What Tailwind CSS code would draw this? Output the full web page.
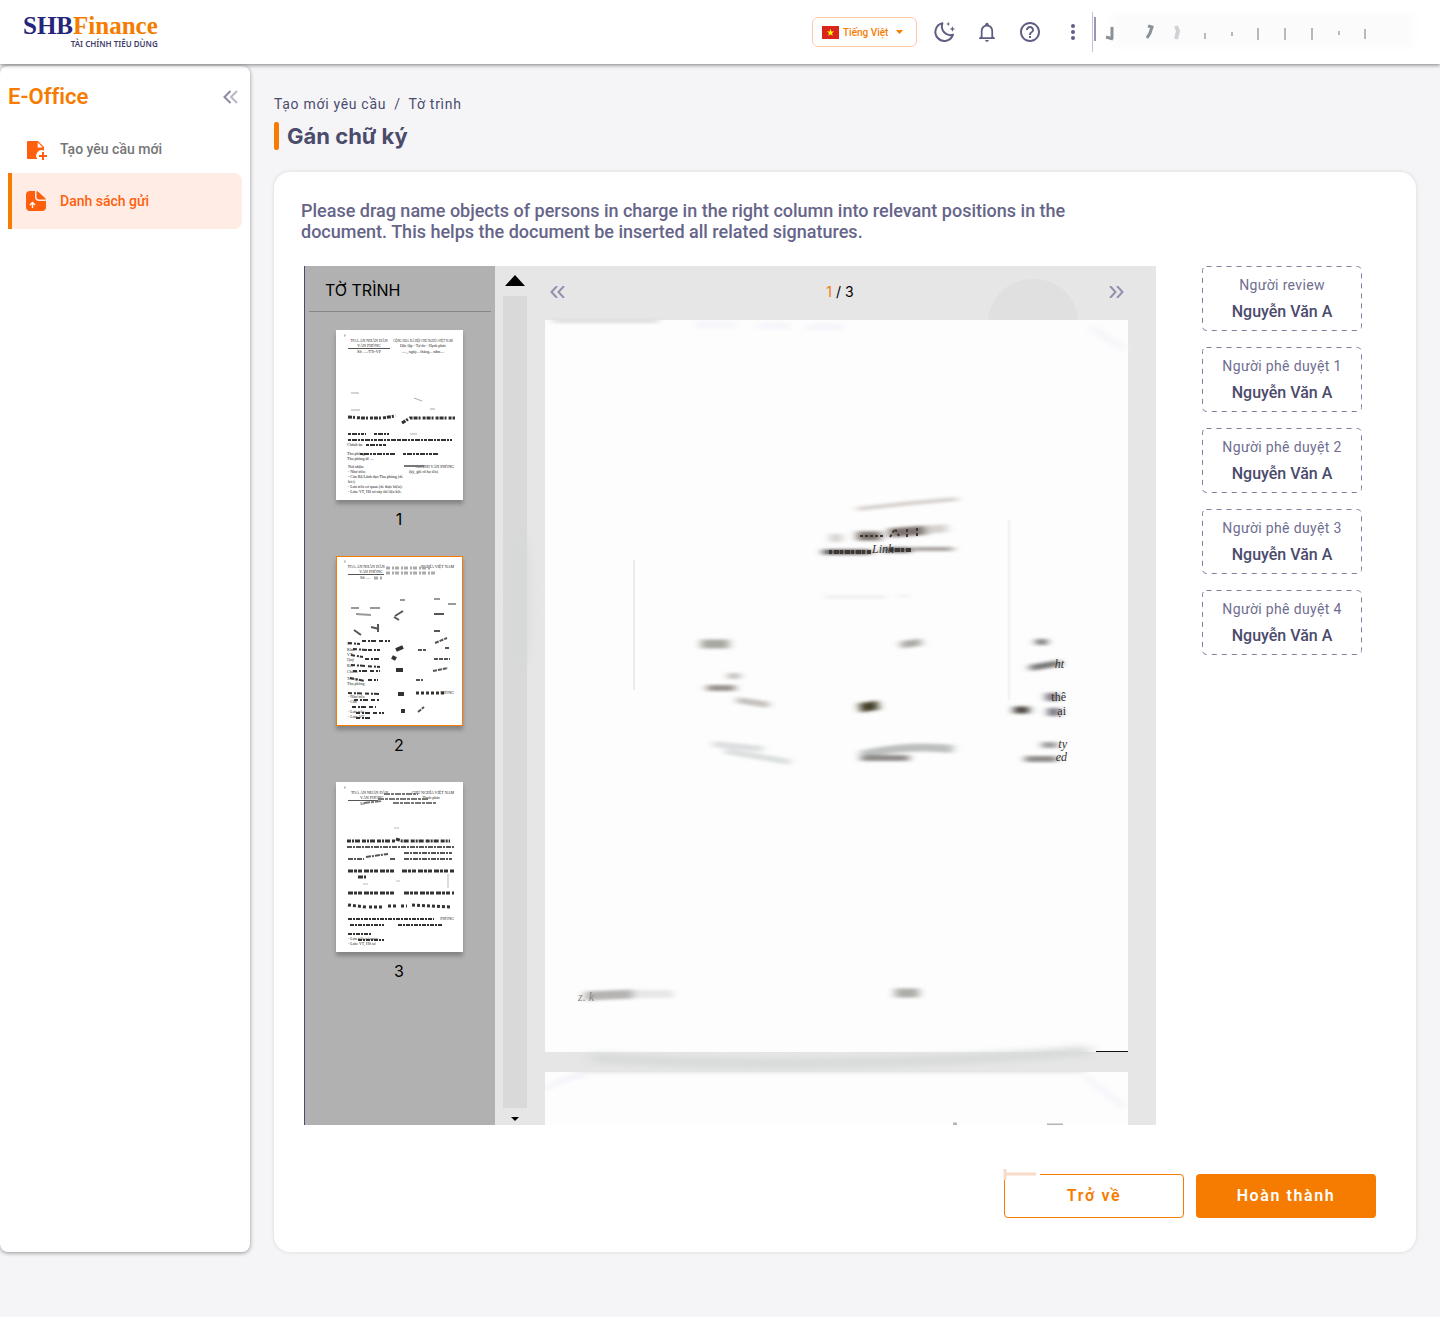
<!DOCTYPE html>
<html lang="vi">
<head>
<meta charset="utf-8">
<meta name="viewport" content="width=device-width, initial-scale=1">
<title>SHBFinance - Gán chữ ký</title>
<script src="https://cdn.jsdelivr.net/npm/@tailwindcss/browser@4"></script>
</head>
<body class="min-h-screen bg-[#f5f5f8] font-['Roboto',sans-serif] text-[#4b4b6c]">

<!-- Shared blur filters for scanned-document marks -->
<svg class="absolute size-0" aria-hidden="true">
  <defs>
    <filter id="b1" filterUnits="userSpaceOnUse" x="-100" y="-100" width="900" height="1000"><feGaussianBlur stdDeviation="0.7"/></filter>
    <filter id="b2" filterUnits="userSpaceOnUse" x="-100" y="-100" width="900" height="1000"><feGaussianBlur stdDeviation="4 1.500"/></filter>
    <filter id="b5" filterUnits="userSpaceOnUse" x="-100" y="-100" width="900" height="1000"><feGaussianBlur stdDeviation="7 3"/></filter>
  </defs>
</svg>

<header class="relative z-10 flex h-16 items-center justify-between bg-white pl-[23px] shadow-[0_1px_4px_rgba(0,0,0,0.5)]">
  <a href="#" class="flex flex-col items-end">
    <span class="font-['Liberation_Serif',serif] text-[25px] leading-6 font-bold text-[#25257c]">SHB<span class="text-[#f57c00]">Finance</span></span>
    <span class="font-['Noto_Sans',sans-serif] text-[8px] leading-3 font-semibold text-[#3f3d6b]">TÀI CHÍNH TIÊU DÙNG</span>
  </a>
  <div class="flex items-center">
    <button type="button" class="mr-[15px] flex h-[30px] w-[105px] items-center rounded-md border border-[#ffc9a8] pl-[9px] text-[10px] font-medium text-[#f57c00]">
      <svg class="mr-1 h-[13px] w-[17px]" viewBox="0 0 17 13" aria-hidden="true"><rect width="17" height="13" fill="#da251d"/><path d="M8.500 2.800l.9 2.600h2.800l-2.200 1.700.8 2.700-2.300-1.600-2.300 1.600.8-2.700-2.200-1.700h2.800z" fill="#ff0"/></svg>
      Tiếng Việt
      <svg class="ml-2 h-1 w-[7px]" viewBox="0 0 7 4" aria-hidden="true"><path d="M0 0h7L3.500 4z" fill="#f57c00"/></svg>
    </button>
    <div class="flex gap-[19px] text-[#5f5e83]">
      <button type="button" aria-label="Giao diện tối" class="size-6">
        <svg viewBox="0 0 24 24" fill="none" aria-hidden="true"><path d="M10.400 3.100A9 9 0 1 0 21 14.600C14.500 16.900 8 10.700 10.400 3.100z" stroke="currentColor" stroke-width="2" stroke-linejoin="round"/><path d="M16.200 1.800l.6 1.600 1.600.6-1.600.6-.6 1.600-.6-1.600-1.600-.6 1.600-.6zM20.400 6.200l.8 2 2 .8-2 .8-.8 2-.8-2-2-.8 2-.8z" fill="currentColor"/></svg>
      </button>
      <button type="button" aria-label="Thông báo" class="size-6">
        <svg viewBox="0 0 24 24" fill="currentColor" aria-hidden="true"><path d="M10 21h4c0 1.100-.9 2-2 2s-2-.9-2-2M21 19v1H3v-1l2-2v-6c0-3.100 2.030-5.830 5-6.710V4a2 2 0 1 1 4 0v.29c2.970.88 5 3.610 5 6.710v6l2 2m-4-8a5 5 0 1 0-10 0v7h10z" transform="translate(1.400 1) scale(.88 .9)"/></svg>
      </button>
      <button type="button" aria-label="Trợ giúp" class="size-6">
        <svg viewBox="0 0 24 24" fill="currentColor" aria-hidden="true"><path d="M11 18h2v-2h-2v2zm1-16C6.480 2 2 6.480 2 12s4.480 10 10 10 10-4.480 10-10S17.520 2 12 2zm0 18c-4.410 0-8-3.590-8-8s3.590-8 8-8 8 3.590 8 8-3.590 8-8 8zm0-14c-2.210 0-4 1.790-4 4h2c0-1.100.9-2 2-2s2 .9 2 2c0 2-3 1.750-3 5h2c0-2.250 3-2.500 3-5 0-2.210-1.790-4-4-4z"/></svg>
      </button>
      <button type="button" aria-label="Thêm" class="size-6">
        <svg viewBox="0 0 24 24" fill="currentColor" aria-hidden="true"><circle cx="12" cy="6" r="2"/><circle cx="12" cy="12" r="2"/><circle cx="12" cy="18" r="2"/></svg>
      </button>
    </div>
    <div class="ml-[7px] h-10 border-l border-[#c3c2d6]">
      <svg class="h-10 w-[347px]" viewBox="0 0 347 40" aria-hidden="true">
        <rect x="20" y="0" width="300" height="36" fill="#fbfbfc" filter="url(#b5)"/>
        <path d="M2 5v24" stroke="#9a95b0" stroke-width="2" filter="url(#b1)"/>
        <g fill="none" stroke="#8a9197" filter="url(#b1)">
          <path d="M19 15v12M13 25l7 2" stroke-width="3"/>
          <path d="M55 14l4 1-2 6-3 5" stroke-width="3"/>
          <path d="M83 14l2 5-2 8" stroke="#cfd1d5" stroke-width="4"/>
          <path d="M112 21v6M139 20v4M165 16v12M192 16v12M219 16v12M246 19v4M272 17v10" stroke="#b5babc" stroke-width="2"/>
        </g>
      </svg>
    </div>
  </div>
</header>

<div class="flex pb-[65px]">
  <aside class="mt-0.5 w-[250px] shrink-0 rounded-lg bg-white px-2 shadow-[0_1px_4px_rgba(0,0,0,0.4)]">
    <div class="flex h-[59px] items-center justify-between pt-0.5 pr-1">
      <h2 class="text-[22px] leading-7 font-semibold text-[#f57c00] [font-variant-ligatures:none]">E-Office</h2>
      <button type="button" aria-label="Thu gọn menu">
        <svg class="h-[14px] w-[15px]" viewBox="0 0 15 14" fill="none" stroke-width="2" aria-hidden="true"><path d="M7.500 1L1.500 7l6 6" stroke="#8b8aa3"/><path d="M14 1L8 7l6 6" stroke="#b9b8c8"/></svg>
      </button>
    </div>
    <nav class="text-sm font-medium">
      <a href="#" class="flex h-12 items-center gap-3 pl-4 text-[#757575]">
        <svg class="size-6" viewBox="0 0 24 24" aria-hidden="true"><path d="M4 4h10l6 6v3.500a5.500 5.500 0 0 0-6.500 8.500H4a1 1 0 0 1-1-1V5a1 1 0 0 1 1-1z" fill="#ff600f"/><path d="M13.700 5.500v5h5z" fill="#fff"/><path d="M19 15v8M15 19h8" stroke="#ff600f" stroke-width="2"/></svg>
        Tạo yêu cầu mới
      </a>
      <a href="#" aria-current="page" class="flex h-14 items-center gap-3 rounded-r-lg border-l-4 border-[#f57c00] bg-[#ffede5] pl-3 text-[#ff5f0d]">
        <svg class="size-6" viewBox="0 0 24 24" aria-hidden="true"><path d="M6 2h5v6a4 4 0 0 0 4 4h7v6a4 4 0 0 1-4 4H6a4 4 0 0 1-4-4V6a4 4 0 0 1 4-4z" fill="#ff5f0d"/><path d="M12.500 2.200c1 0 1.500.3 2 .8l6.500 6c.6.500.8 1 .8 1.600h-6.300a3 3 0 0 1-3-3z" fill="#ff5f0d"/><path d="M8.500 19v-5M6 16l2.500-2.500L11 16" fill="none" stroke="#fff" stroke-width="1.400"/></svg>
        Danh sách gửi
      </a>
    </nav>
  </aside>

  <main class="min-w-0 flex-1 px-6 pt-[30px]">
    <nav aria-label="Breadcrumb" class="flex gap-2 text-sm leading-5 tracking-wider">
      <a href="#">Tạo mới yêu cầu</a><span>/</span><a href="#">Tờ trình</a>
    </nav>
    <div class="mt-2 flex h-7 items-center gap-2">
      <span class="h-7 w-[5px] rounded-xs bg-[#f57c00]"></span>
      <h1 class="font-['Inter',sans-serif] text-[22px] leading-7 font-bold">Gán chữ ký</h1>
    </div>

    <section class="mt-[22px] rounded-2xl bg-white pt-7 pb-[34px] shadow-[0_0_4px_rgba(0,0,0,0.12)]">
      <p class="max-w-[840px] px-[27px] text-lg leading-[21px] font-medium text-[#666589]">Please drag name objects of persons in charge in the right column into relevant positions in the document. This helps the document be inserted all related signatures.</p>

      <div class="mt-6 flex gap-[46px] pr-[54px] pl-[30px]">
        <div class="flex min-w-0 flex-1 bg-[#e6e6e6] font-['Inter',sans-serif] text-black">
          <!-- Page thumbnails -->
          <div class="w-[191px] shrink-0 border-l border-[#4b4b6c] bg-[#b1b1b1]">
            <h3 class="mx-1 h-[46px] border-b border-[#858585] pt-1 pl-4 text-base leading-10">TỜ TRÌNH</h3>
            <ol class="flex flex-col items-center gap-[25px] pt-[18px] pr-0.5">
              <li>
                <button type="button" class="block text-center text-base leading-6">
                  <svg class="mb-[7px] h-[170px] w-[127px] bg-white shadow-[0_4px_4px_rgba(0,0,0,0.25)]" viewBox="0 0 127 170" aria-hidden="true">
                    <g font-family="Liberation Serif, serif" font-size="3" fill="#222">
                      <text x="8" y="7">#</text>
                      <text x="33" y="12" font-size="4" text-anchor="middle">TOÀ ÁN NHÂN DÂN</text><text x="33" y="17" font-size="4" text-anchor="middle">VĂN PHÒNG</text><text x="33" y="23" font-size="4" text-anchor="middle">Số: ..../TTr-VP</text>
                      <text x="87" y="12" text-anchor="middle">CỘNG HOÀ XÃ HỘI CHỦ NGHĨA VIỆT NAM</text><text x="87" y="17" font-size="4" text-anchor="middle">Độc lập - Tự do - Hạnh phúc</text><text x="87" y="23" font-size="4" text-anchor="middle">....., ngày... tháng... năm....</text>
                    </g>
                    <path d="M12 18.500h42" stroke="#555"/>
                    <g font-family="Liberation Serif, serif" font-size="4" fill="#111">
                      <text x="11" y="116">Chánh án</text><text x="11" y="125">Thu phòng</text><text x="11" y="130">Thu phòng từ ....</text>
                      <text x="12" y="138">Nơi nhận:</text><text x="12" y="143">- Như trên;</text><text x="12" y="148">- Cán Bộ Lãnh đạo Thu phòng (để</text><text x="12" y="153">b/c);</text><text x="12" y="158">- Lưu trên cơ quan (để thực hiện);</text><text x="12" y="163">- Lưu: VT, Hồ sơ này thì liệu kết.</text>
                      <text x="118" y="138" text-anchor="end">CHÁNH VĂN PHÒNG</text><text x="73" y="143">(ký, ghi rõ họ tên)</text>
                    </g>
                    <g fill="none" stroke="#333" filter="url(#b1)">
                      <path d="M15 63h8M15 80h9M78 68l8 3M94 79h5M74 104h7" stroke="#aaa"/>
                      <path d="M12 87l14 1h20l14-2M66 93l8-5h45" stroke-width="3" stroke-dasharray="4 1 2 2 3 1"/>
                      <path d="M12 104h18M38 104h15M12 110h50M62 110h54M30 115h20M24 124h36M67 124h36" stroke-width="2" stroke-dasharray="3 1 5 1 2 1"/>
                      <path d="M68 136h20" stroke-width="2" stroke="#777"/>
                    </g>
                  </svg>1
                </button>
              </li>
              <li>
                <button type="button" aria-current="true" class="block text-center text-base leading-6">
                  <svg class="mb-[7px] h-[170px] w-[127px] border border-[#f57c00] bg-white shadow-[0_4px_4px_rgba(0,0,0,0.25)]" viewBox="1 1 125 168" aria-hidden="true">
                    <g font-family="Liberation Serif, serif" font-size="4" fill="#222">
                      <text x="8" y="7" font-size="3">#</text><text x="30" y="12" text-anchor="middle">TOÀ ÁN NHÂN DÂN</text><text x="35" y="17" text-anchor="middle">VĂN PHÒNG</text><text x="24" y="23">Số: ....</text><text x="118" y="12" text-anchor="end">NGHĨA VIỆT NAM</text>
                      <text x="11" y="89">Số</text><text x="11" y="95">Kính</text><text x="11" y="100">VT</text><text x="11" y="105">Quý</text><text x="11" y="111">Kết</text><text x="11" y="117">Chánh</text><text x="11" y="124">Trong</text><text x="11" y="129">Thu phòng</text><text x="12" y="142">- Như trên</text><text x="12" y="147">- Căn</text><text x="12" y="157">- Lưu trên</text><text x="12" y="162">- Lưu: VT</text><text x="118" y="138" text-anchor="end">PHÒNG</text>
                    </g>
                    <path d="M12 18.500h36" stroke="#555"/>
                    <g fill="none" stroke="#333" filter="url(#b1)">
                      <path d="M50 12h45M50 17h50M38 22h8" stroke="#aaa" stroke-width="3" stroke-dasharray="4 2 2 1"/>
                      <path d="M15 52h8M34 52h10M20 58l15 1M64 44h5M112 48h8M98 43h6" stroke="#999" stroke-width="2"/>
                      <path d="M59 60l8-5M58 61l5 3M98 58h10M35 71l8 2M42 68v8M98 75h6M18 74l7 5" stroke="#555" stroke-width="2"/>
                      <path d="M12 87l12 1M26 85h28M17 93l14 1M32 94h12M15 99l12 2M29 103h15M15 109l29 2M17 115h27M14 122l15 3M32 124h10M12 137l31 1M18 144h26M16 151h24M20 157h28M20 162h16" stroke-width="2" stroke-dasharray="4 2 2 1 5 3"/>
                      <path d="M60 94l7-3M56 101l4 2M60 114h7M62 138h6M65 155h4" stroke-width="4"/>
                      <path d="M82 94h8M99 87l12-5M109 92h5M98 103h16M97 115l15-3M80 124h7M82 156l6-5" stroke="#555" stroke-width="2" stroke-dasharray="4 1"/>
                      <path d="M80 137h30" stroke-width="3" stroke-dasharray="3 2"/>
                    </g>
                  </svg>2
                </button>
              </li>
              <li>
                <button type="button" class="block text-center text-base leading-6">
                  <svg class="mb-[7px] h-[170px] w-[127px] bg-white shadow-[0_4px_4px_rgba(0,0,0,0.25)]" viewBox="0 0 127 170" aria-hidden="true">
                    <g font-family="Liberation Serif, serif" font-size="4" fill="#222">
                      <text x="8" y="7" font-size="3">#</text><text x="15" y="12">TOÀ ÁN NHÂN DÂN</text><text x="118" y="12" text-anchor="end">CHỦ NGHĨA VIỆT NAM</text><text x="24" y="17">VĂN PHÒNG</text><text x="104" y="17" text-anchor="end">Hạnh phúc</text><text x="24" y="23">Số</text>
                      <text x="118" y="138" text-anchor="end">PHÒNG</text><text x="12" y="158">- Lưu trên cơ quan</text><text x="12" y="163">- Lưu: VT, Hồ sơ</text>
                    </g>
                    <path d="M12 18.500h30" stroke="#555"/>
                    <g fill="none" stroke="#333" filter="url(#b1)">
                      <path d="M48 12h34M42 17h50M28 21l18-2M57 21h44" stroke="#777" stroke-width="2" stroke-dasharray="6 1 3 1"/>
                      <path d="M58 46h5M27 102h5M60 99h4M112 92v14" stroke="#bbb"/>
                      <path d="M11 59h48M60 57l6 2h48" stroke-width="3" stroke-dasharray="4 1 2 1 5 2"/>
                      <path d="M11 65h108M68 71h48M12 77h16M30 75l22-3M54 77h6M68 77h48" stroke="#555" stroke-width="2" stroke-dasharray="5 1 2 1"/>
                      <path d="M12 89h48M66 89h52M22 95h8M12 111h47M68 111h50" stroke-width="3" stroke-dasharray="5 1 3 1 4 2"/>
                      <path d="M12 123l18 2M33 125h14M52 124h8M65 124h6M76 123l38 2" stroke-width="3" stroke-dasharray="3 2"/>
                      <path d="M12 137h86M14 143h34M62 143h44M12 152h24M22 158h26" stroke-width="2" stroke-dasharray="4 1 2 1"/>
                    </g>
                  </svg>3
                </button>
              </li>
            </ol>
          </div>

          <!-- Scroll track -->
          <div class="ml-2 flex w-6 shrink-0 flex-col items-center">
            <button type="button" aria-label="Cuộn lên" class="flex h-[30px] items-center pb-0.5"><svg class="h-[11px] w-5" viewBox="0 0 20 11" aria-hidden="true"><path d="M10 0l10 11H0z"/></svg></button>
            <div class="w-6 flex-1 bg-[#d9d9d9]"></div>
            <button type="button" aria-label="Cuộn xuống" class="flex h-[17px] items-center pt-1"><svg class="h-1 w-2" viewBox="0 0 8 4" aria-hidden="true"><path d="M0 0h8L4 4z"/></svg></button>
          </div>

          <!-- Document viewer -->
          <div class="min-w-0 flex-1 pr-7 pl-[18px]">
            <div class="mb-0.5 flex h-[52px] items-center justify-between pr-1 pl-[5px] text-sm">
              <button type="button" aria-label="Trang trước"><svg class="h-3 w-[15px]" viewBox="0 0 15 12" fill="none" stroke="#9190b0" stroke-width="2" aria-hidden="true"><path d="M7 0L1.500 6 7 12M14 0L8.500 6l5.500 6"/></svg></button>
              <span class="pl-1.5"><span class="text-[#f57c00]">1</span> / 3</span>
              <button type="button" aria-label="Trang sau"><svg class="h-3 w-[15px]" viewBox="0 0 15 12" fill="none" stroke="#9190b0" stroke-width="2" aria-hidden="true"><path d="M1 0l5.500 6L1 12M8 0l5.500 6L8 12"/></svg></button>
            </div>
            <svg class="block w-full overflow-visible" viewBox="0 0 583 732" role="img" aria-label="Trang tài liệu">
              <path d="M443 1c5-56 86-56 90 0z" fill="#dfe0df" filter="url(#b1)"/>
              <ellipse cx="-26" cy="280" rx="8" ry="70" fill="#d6d8d8" filter="url(#b5)"/>
              <rect width="583" height="732" fill="#fdfdfd"/>
              <path d="M8 1h105" stroke="#dcdddd" stroke-width="4" filter="url(#b2)"/>
              <path d="M150 5h40M213 6h32M262 7h36M545 7l34 22" stroke="#f6f5fb" stroke-width="7" filter="url(#b2)"/>
              <path d="M464 200v180" stroke="#f2f4f4" stroke-width="3" filter="url(#b1)"/>
              <path d="M89 240v130" stroke="#e9eeec" stroke-width="2" filter="url(#b1)"/>
              <g fill="none" stroke="#8d8680" filter="url(#b2)">
                <path d="M312 189l55-6 45-4" stroke="#d5cfcb" stroke-width="4"/>
                <path d="M312 216h24M344 213l38-3" stroke="#7d736e" stroke-width="9"/>
                <path d="M285 218h12M380 210l22-2" stroke="#d5d1cf" stroke-width="8"/>
                <path d="M278 232h48M338 230h28" stroke="#55504e" stroke-width="5"/>
                <path d="M368 229h40" stroke="#a6a09e" stroke-width="4"/>
                <path d="M355 276h8M280 277h60" stroke="#f1efee" stroke-width="4"/>
                <path d="M156 324h28" stroke="#a8a8a2" stroke-width="9"/><path d="M356 325l20-3" stroke="#aaa9a4" stroke-width="7"/><path d="M491 322h11" stroke="#777" stroke-width="6"/>
                <path d="M183 356h12M192 380l32 5" stroke="#c3c0bd" stroke-width="6"/><path d="M162 368h28" stroke="#99938e" stroke-width="6"/>
                <path d="M485 348l30-5" stroke="#777" stroke-width="6"/><path d="M315 388l18-3" stroke="#3f3c26" stroke-width="9"/><path d="M469 390h15" stroke="#44413a" stroke-width="7"/><path d="M501 377h12M503 392h12" stroke="#77707a" stroke-width="8"/>
                <path d="M168 424l50 5M180 431l65 11" stroke="#dcdfdf" stroke-width="6"/><path d="M316 435q43-11 92-6" stroke="#bcbfbe" stroke-width="8"/><path d="M316 438h48M480 439h32" stroke="#8f8c89" stroke-width="6"/><path d="M497 425h15" stroke="#999" stroke-width="6"/>
                <path d="M40 676l48-2" stroke="#b5b4b2" stroke-width="9"/><path d="M88 674h40" stroke="#e6e7e7" stroke-width="8"/><path d="M350 673h24" stroke="#acaca8" stroke-width="9"/>
              </g>
              <g fill="none" stroke="#3d3734" filter="url(#b1)">
                <path d="M315 216h23M345 217l5-8 4 7M362 217v-10M372 216v-10" stroke-width="2" stroke-dasharray="3 2"/>
                <path d="M284 232h42M345 230h22" stroke-width="4" stroke-dasharray="3 2 5 1"/>
              </g>
              <g font-family="Liberation Serif, serif" font-size="12" fill="#333">
                <text x="327" y="233" font-style="italic">Linh</text>
                <text x="521" y="381" text-anchor="end">thê</text><text x="521" y="395" text-anchor="end">ại</text>
                <text x="522" y="428" text-anchor="end" font-style="italic">ty</text><text x="522" y="441" text-anchor="end" font-style="italic">ed</text><text x="519" y="348" text-anchor="end" font-style="italic">ht</text>
                <text x="33" y="681" font-style="italic" fill="#888">z. k</text>
              </g>
              <path d="M45 738q240 14 500-7" fill="none" stroke="#d8dada" stroke-width="10" filter="url(#b5)"/>
              <path d="M551 731.500h32" stroke="#111"/>
            </svg>
            <svg class="mt-5 block h-[53px] w-full" viewBox="0 0 583 53" preserveAspectRatio="none" aria-hidden="true">
              <rect width="583" height="53" fill="#fdfdfd"/>
              <path d="M30 0h510" stroke="#e8e9e8" stroke-width="3" filter="url(#b2)"/>
              <path d="M0 18q15-12 40-15M540 4l40 32" stroke="#f4f3fa" stroke-width="5" fill="none" filter="url(#b2)"/>
              <path d="M502 53h16M408 52h4" stroke="#b5b5b0" stroke-width="3" filter="url(#b1)"/>
            </svg>
          </div>
        </div>

        <!-- Signers -->
        <ul class="flex w-40 shrink-0 flex-col gap-4 text-center">
          <li draggable="true" class="relative h-[65px] cursor-grab pt-[9px]">
            <svg class="absolute inset-0 size-full" viewBox="0 0 160 65" fill="none" aria-hidden="true"><rect x=".5" y=".5" width="159" height="64" rx="4" stroke="#7f7e9e" stroke-dasharray="5 5"/></svg>
            <p class="text-sm leading-5 tracking-wide text-[#6f6e90]">Người review</p><p class="mt-[7px] text-base leading-5 font-medium">Nguyễn Văn A</p>
          </li>
          <li draggable="true" class="relative h-[65px] cursor-grab pt-[9px]">
            <svg class="absolute inset-0 size-full" viewBox="0 0 160 65" fill="none" aria-hidden="true"><rect x=".5" y=".5" width="159" height="64" rx="4" stroke="#7f7e9e" stroke-dasharray="5 5"/></svg>
            <p class="text-sm leading-5 tracking-wide text-[#6f6e90]">Người phê duyệt 1</p><p class="mt-[7px] text-base leading-5 font-medium">Nguyễn Văn A</p>
          </li>
          <li draggable="true" class="relative h-[65px] cursor-grab pt-[9px]">
            <svg class="absolute inset-0 size-full" viewBox="0 0 160 65" fill="none" aria-hidden="true"><rect x=".5" y=".5" width="159" height="64" rx="4" stroke="#7f7e9e" stroke-dasharray="5 5"/></svg>
            <p class="text-sm leading-5 tracking-wide text-[#6f6e90]">Người phê duyệt 2</p><p class="mt-[7px] text-base leading-5 font-medium">Nguyễn Văn A</p>
          </li>
          <li draggable="true" class="relative h-[65px] cursor-grab pt-[9px]">
            <svg class="absolute inset-0 size-full" viewBox="0 0 160 65" fill="none" aria-hidden="true"><rect x=".5" y=".5" width="159" height="64" rx="4" stroke="#7f7e9e" stroke-dasharray="5 5"/></svg>
            <p class="text-sm leading-5 tracking-wide text-[#6f6e90]">Người phê duyệt 3</p><p class="mt-[7px] text-base leading-5 font-medium">Nguyễn Văn A</p>
          </li>
          <li draggable="true" class="relative h-[65px] cursor-grab pt-[9px]">
            <svg class="absolute inset-0 size-full" viewBox="0 0 160 65" fill="none" aria-hidden="true"><rect x=".5" y=".5" width="159" height="64" rx="4" stroke="#7f7e9e" stroke-dasharray="5 5"/></svg>
            <p class="text-sm leading-5 tracking-wide text-[#6f6e90]">Người phê duyệt 4</p><p class="mt-[7px] text-base leading-5 font-medium">Nguyễn Văn A</p>
          </li>
        </ul>
      </div>

      <div class="mt-[49px] flex justify-end gap-3 pr-10 text-base font-semibold tracking-widest">
        <button type="button" class="relative h-11 w-[180px] rounded border border-[#f57c00] text-[#f57c00]">Trở về
          <svg class="absolute -top-2.5 -left-1 h-5 w-12 overflow-visible" viewBox="0 0 48 20" aria-hidden="true"><path d="M0 6h39v6H8v3H0z" fill="#fff"/><path d="M4 4v11M5 9h30" fill="none" stroke="#f3c3a4" stroke-width="3" filter="url(#b1)" opacity=".6"/></svg>
        </button>
        <button type="button" class="h-11 w-[180px] rounded bg-[#f57c00] text-white">Hoàn thành</button>
      </div>
    </section>
  </main>
</div>
</body>
</html>
